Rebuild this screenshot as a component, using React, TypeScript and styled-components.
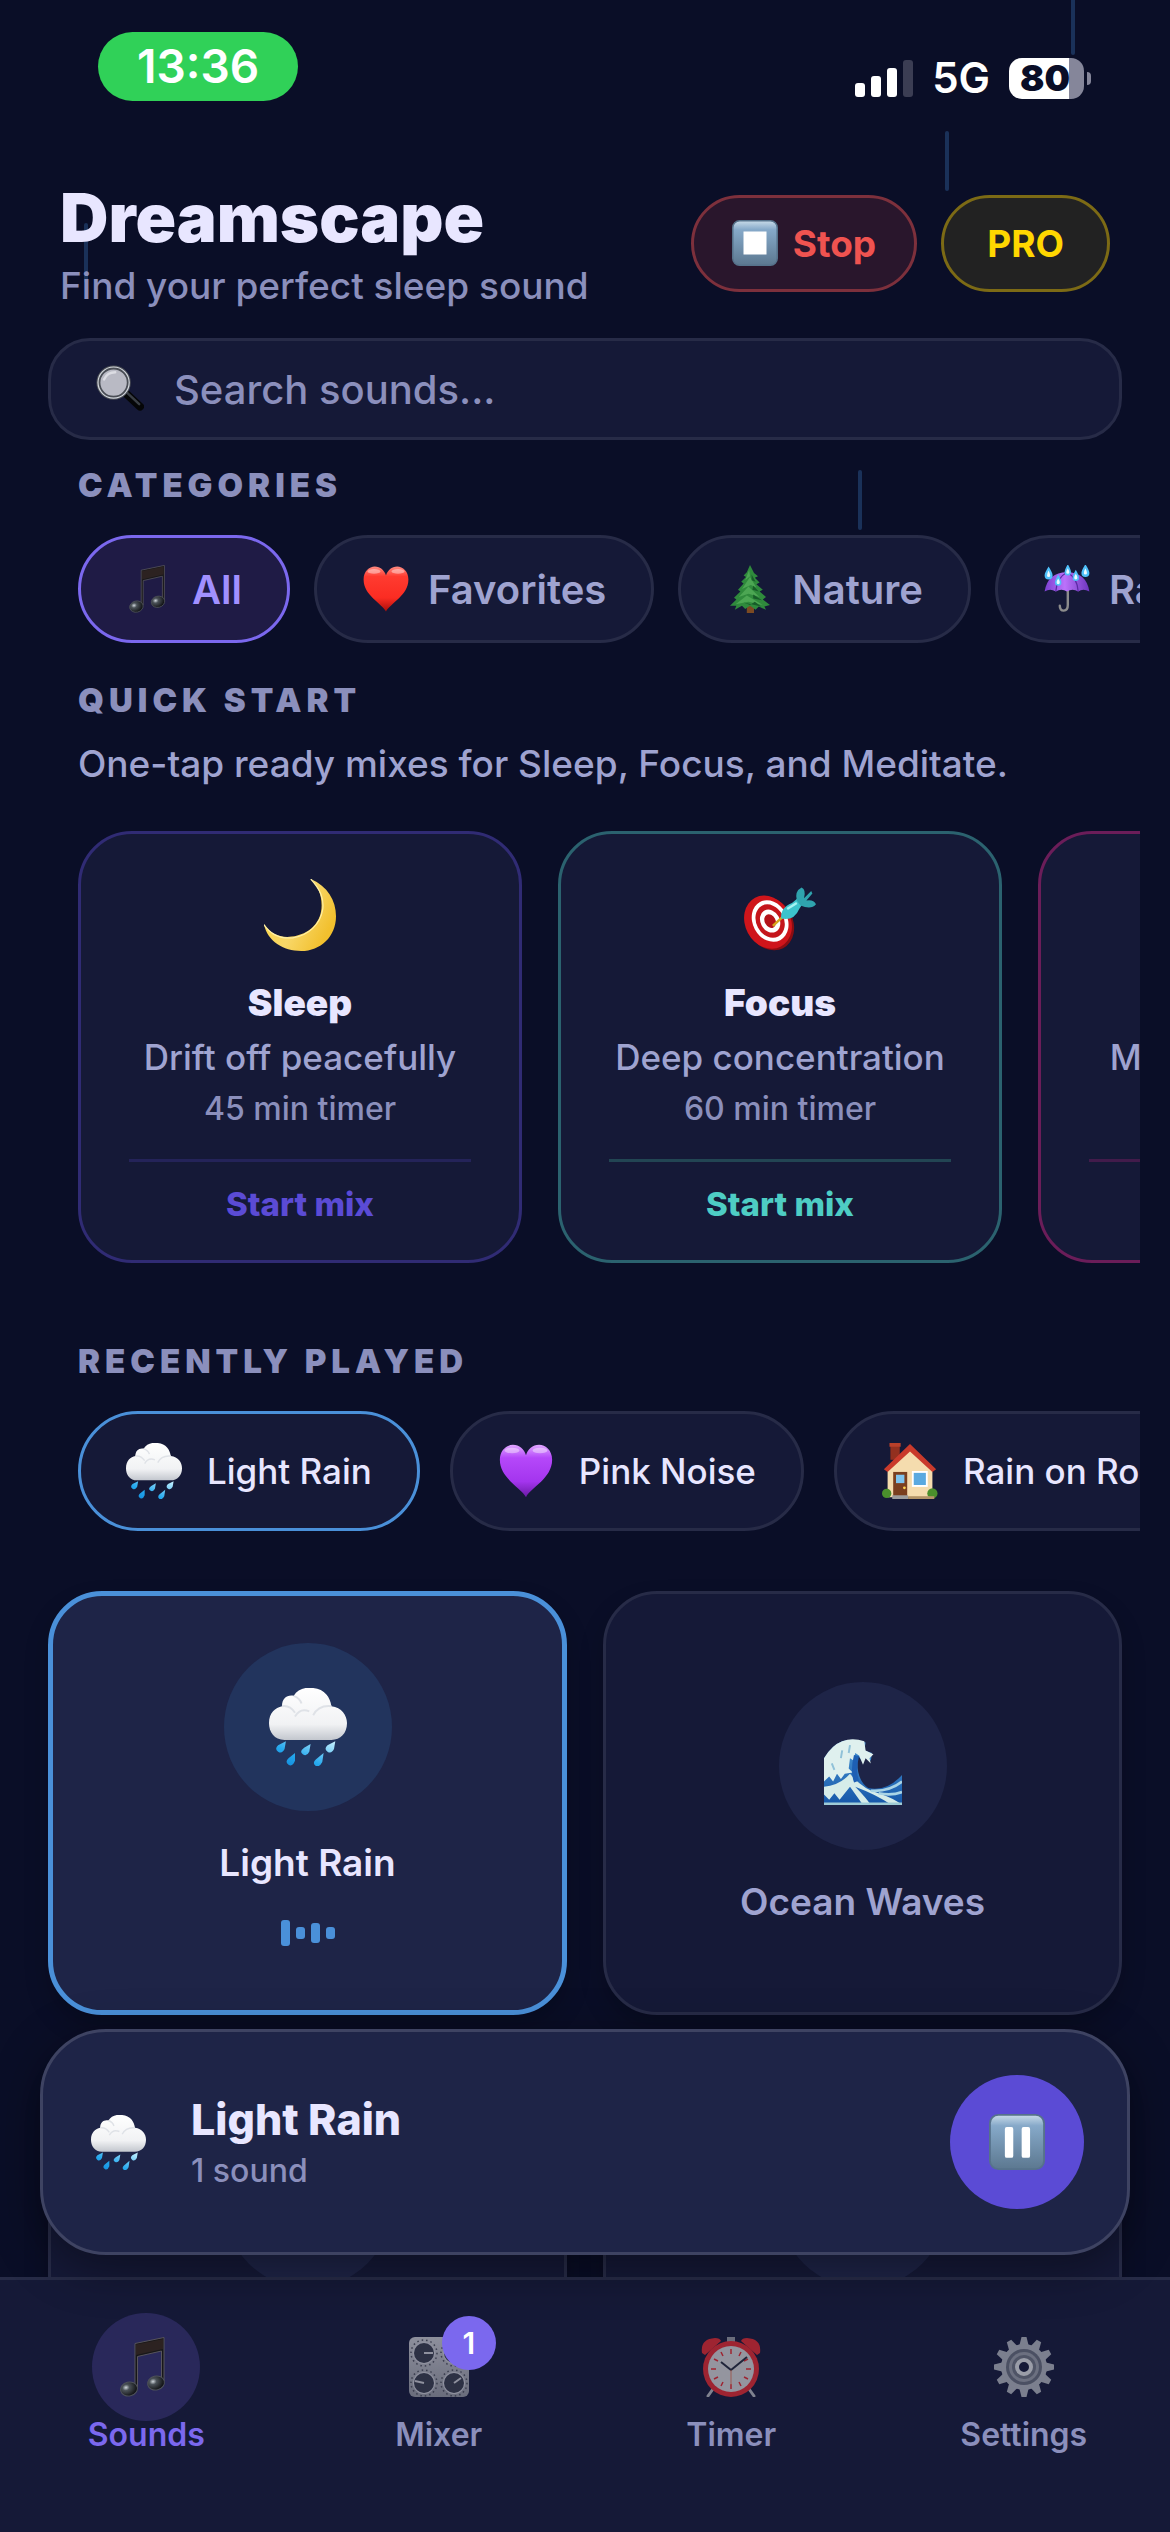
import React from "react";
import styled, { createGlobalStyle } from "styled-components";

const color = {
  bg: "#0a0e27",
  surface: "#151937",
  raised: "#1e2447",
  line: "#272b47",
  text: "#e8e6ff",
  soft: "#9fa3d0",
  muted: "#8b8fbc",
  violet: "#7b68ee",
  indigo: "#5b4bd5",
  blue: "#4a90d9",
};

const GlobalStyle = createGlobalStyle`
  *, *::before, *::after { box-sizing: border-box; }
  html, body, #root { height: 100%; }
  body {
    margin: 0;
    background: ${color.bg};
    color: ${color.text};
    font-family: Inter, Roboto, "Liberation Sans", sans-serif;
  }
  button, input { font-family: inherit; margin: 0; }
  button { cursor: pointer; }
  h1, h2, p { margin: 0; }
  svg { display: block; flex: none; }
`;

/* ---------- Icons ---------- */

type IconProps = { size: number };

const Defs = styled.svg`
  position: absolute;
  width: 0;
  height: 0;
`;

const Gradients = () => (
  <Defs aria-hidden="true">
    <defs>
      <linearGradient id="key" x1="0" y1="0" x2="0" y2="1">
        <stop offset="0" stopColor="#c9dbe9" />
        <stop offset="0.2" stopColor="#86a9c9" />
        <stop offset="1" stopColor="#5c7890" />
      </linearGradient>
      <linearGradient id="cloud" x1="0" y1="0" x2="0" y2="1">
        <stop offset="0" stopColor="#ffffff" />
        <stop offset="0.7" stopColor="#f1f2f4" />
        <stop offset="1" stopColor="#c3c7ce" />
      </linearGradient>
      <linearGradient id="drop" x1="1" y1="0" x2="0" y2="1">
        <stop offset="0" stopColor="#c8f2ff" />
        <stop offset="0.6" stopColor="#26a9ee" />
        <stop offset="1" stopColor="#0d86d8" />
      </linearGradient>
      <linearGradient id="redHeart" x1="0" y1="0" x2="0" y2="1">
        <stop offset="0" stopColor="#ff8a80" />
        <stop offset="0.22" stopColor="#ff3b30" />
        <stop offset="0.7" stopColor="#fb2c22" />
        <stop offset="1" stopColor="#a80f0b" />
      </linearGradient>
      <linearGradient id="purpleHeart" x1="0" y1="0" x2="0" y2="1">
        <stop offset="0" stopColor="#e0a6ff" />
        <stop offset="0.25" stopColor="#b548fa" />
        <stop offset="0.7" stopColor="#a435ee" />
        <stop offset="1" stopColor="#6a1aa5" />
      </linearGradient>
      <linearGradient id="moon" x1="0" y1="0" x2="1" y2="0.5">
        <stop offset="0" stopColor="#ffd83a" />
        <stop offset="0.6" stopColor="#f8d768" />
        <stop offset="1" stopColor="#f2c02e" />
      </linearGradient>
      <linearGradient id="umbrella" x1="0" y1="0" x2="1" y2="0">
        <stop offset="0" stopColor="#7a3fd0" />
        <stop offset="0.45" stopColor="#bb72fb" />
        <stop offset="1" stopColor="#6c35bd" />
      </linearGradient>
      <linearGradient id="wave" x1="0" y1="0" x2="0" y2="1">
        <stop offset="0" stopColor="#4d9bd8" />
        <stop offset="1" stopColor="#1556a8" />
      </linearGradient>
      <linearGradient id="metal" x1="0" y1="0" x2="0" y2="1">
        <stop offset="0" stopColor="#8d8f9c" />
        <stop offset="1" stopColor="#6a6d7c" />
      </linearGradient>
      <radialGradient id="noteHead" cx="0.35" cy="0.35" r="0.7">
        <stop offset="0" stopColor="#cfd6dc" />
        <stop offset="0.3" stopColor="#4b5258" />
        <stop offset="1" stopColor="#0b0c0e" />
      </radialGradient>
    </defs>
  </Defs>
);

const Svg = ({ size, children }: IconProps & { children: React.ReactNode }) => (
  <svg width={size} height={size} viewBox="0 0 60 60" aria-hidden="true">
    {children}
  </svg>
);

const StopIcon = ({ size }: IconProps) => (
  <Svg size={size}>
    <rect x="1" y="1" width="58" height="58" rx="9" fill="url(#key)" stroke="#56728b" strokeWidth="2" />
    <rect x="15" y="15" width="30" height="30" fill="#fff" />
  </Svg>
);

const PauseIcon = ({ size }: IconProps) => (
  <Svg size={size}>
    <rect x="1" y="1" width="58" height="58" rx="9" fill="url(#key)" stroke="#56728b" strokeWidth="2" />
    <rect x="17" y="14" width="9" height="33" rx="2" fill="#fff" />
    <rect x="35" y="14" width="9" height="33" rx="2" fill="#fff" />
  </Svg>
);

const SearchIcon = ({ size }: IconProps) => (
  <Svg size={size}>
    <path d="M38 36 L55 52" stroke="#050607" strokeWidth="10" strokeLinecap="round" />
    <path d="M38 34 L54 49" stroke="#3a3f45" strokeWidth="3" strokeLinecap="round" />
    <circle cx="22" cy="22" r="19" fill="#b9bac4" stroke="#4a4e55" strokeWidth="5" />
    <circle cx="22" cy="22" r="19.5" fill="none" stroke="#d4d8de" strokeWidth="1.5" />
    <path d="M10 18 Q14 9 24 9" stroke="#dcdde3" strokeWidth="3" fill="none" strokeLinecap="round" />
  </Svg>
);

const NoteIcon = ({ size }: IconProps) => (
  <Svg size={size}>
    <path
      d="M19 6.5 L48 0.5 V44 H45.5 V14 L21.5 19.5 V50 H19 Z"
      fill="#171719"
      stroke="#57545c"
      strokeWidth="1"
    />
    <path d="M20 7.500 L47 2 V12 L20 18 Z" fill="#2c2221" />
    <ellipse cx="13" cy="52" rx="8.5" ry="7" transform="rotate(-14 13 52)" fill="url(#noteHead)" stroke="#4d5159" />
    <ellipse cx="40" cy="46" rx="8.5" ry="7" transform="rotate(-14 40 46)" fill="url(#noteHead)" stroke="#4d5159" />
  </Svg>
);

const Heart = ({ size, fill }: IconProps & { fill: string }) => (
  <Svg size={size}>
    <path
      d="M30 58 C25 48 2 38 2 18 C2 8 9 2 16 2 C23 2 28 7 30 13 C32 7 37 2 44 2 C51 2 58 8 58 18 C58 38 35 48 30 58 Z"
      fill={`url(#${fill})`}
    />
    <ellipse cx="15" cy="8" rx="8" ry="3" fill="#fff" opacity="0.4" />
    <ellipse cx="45" cy="8" rx="8" ry="3" fill="#fff" opacity="0.4" />
  </Svg>
);
const RedHeart = ({ size }: IconProps) => <Heart size={size} fill="redHeart" />;
const PurpleHeart = ({ size }: IconProps) => <Heart size={size} fill="purpleHeart" />;

const TreeIcon = ({ size }: IconProps) => (
  <Svg size={size}>
    <rect x="26" y="48" width="9" height="12" fill="#7c4a22" />
    <path
      d="M30 0 L35 10 L40 14 L36 16 L42 22 L38 24 L46 31 L42 33 L50 40 L46 43 L55 50 L48 52 L50 56 L41 52 L37 56 L30 51 L24 55 L20 51 L11 56 L13 51 L5 51 L13 43 L10 41 L18 33 L15 31 L22 23 L19 21 L25 15 L22 13 L26 9 Z"
      fill="#2f8a3c"
    />
    <path
      d="M29 6 L24 19 L30 14 Z M30 15 L20 30 L31 25 L38 28 Z M28 27 L16 40 L28 36 L42 40 Z M26 38 L12 49 L28 46 L46 50 Z"
      fill="#58b25c"
      opacity="0.7"
    />
    <path d="M32 12 L37 21 L32 19 Z M34 26 L41 33 L33 31 Z M34 37 L45 44 L34 42 Z M22 47 L30 50 L36 46 L44 52 Z" fill="#175c29" />
  </Svg>
);

const UmbrellaIcon = ({ size }: IconProps) => (
  <Svg size={size}>
    <path d="M31 30 V50 Q31 57 26 57 Q21 57 21 51" stroke="#8c8c8c" strokeWidth="3" fill="none" strokeLinecap="round" />
    <path d="M2 33 Q6 9 30 9 Q54 9 58 33 Q50 29 44 33 Q37 29 30 33 Q23 29 16 33 Q9 29 2 33 Z" fill="url(#umbrella)" />
    <path d="M30 9 Q17 16 16 33 M30 9 Q43 16 44 33" stroke="#5b2aa3" strokeWidth="1.5" fill="none" />
    <path
      d="M7 2 q5 8 5 11 a5 5 0 0 1 -10 0 q0 -3 5 -11 Z M31 -1 q4 7 4 10 a4 4 0 0 1 -8 0 q0 -3 4 -10 Z M53 -1 q5 8 5 11 a5 5 0 0 1 -10 0 q0 -3 5 -11 Z M19 12 q4 7 4 10 a4 4 0 0 1 -8 0 q0 -3 4 -10 Z M41 6 q4 7 4 10 a4 4 0 0 1 -8 0 q0 -3 4 -10 Z"
      fill="#4fc0fa"
    />
    <path
      d="M7 7 q2 4 2 6 a2 2 0 0 1 -4 0 q0 -2 2 -6 Z M31 4 q2 4 2 5 a2 2 0 0 1 -4 0 q0 -2 2 -5 Z M53 4 q2 4 2 6 a2 2 0 0 1 -4 0 q0 -2 2 -6 Z M19 17 q2 3 2 5 a2 2 0 0 1 -4 0 q0 -2 2 -5 Z M41 11 q2 3 2 5 a2 2 0 0 1 -4 0 q0 -2 2 -5 Z"
      fill="#eefaff"
    />
  </Svg>
);

const MoonIcon = ({ size }: IconProps) => (
  <Svg size={size}>
    <path d="M39 0 C53 6 60 18 60 31 C60 48 47 60 31 60 C16 60 3 52 0 38 C6 47 15 49 23 48 C38 46 48 36 48 22 C48 13 45 6 39 0 Z" fill="url(#moon)" />
    <path d="M39 0 C47 9 50 16 49 25 C47 38 37 47 24 49 C14 50 6 47 0 38" fill="none" stroke="#fff0a6" strokeWidth="1" />
  </Svg>
);

const TargetIcon = ({ size }: IconProps) => (
  <Svg size={size}>
    <g transform="rotate(-28 20 36)">
      <ellipse cx="21" cy="38" rx="19" ry="23" fill="#8a0d12" />
      <ellipse cx="20" cy="36" rx="19" ry="23" fill="#cf151b" />
      <ellipse cx="22" cy="36" rx="14.5" ry="18" fill="#fff" />
      <ellipse cx="22" cy="36" rx="11.5" ry="14.5" fill="#c5161c" />
      <ellipse cx="22" cy="36" rx="8" ry="10" fill="#fff" />
      <ellipse cx="22" cy="36" rx="4.5" ry="6" fill="#b31319" />
    </g>
    <path d="M24 39 L34 30" stroke="#d6a51c" strokeWidth="2" />
    <path d="M31 33 Q30 24 40 20 L46 15 L50 19 L46 25 Q42 35 31 33 Z" fill="#3cc3cc" />
    <path d="M44 18 Q42 10 48 7 Q52 9 50 16 L56 10 L57 12 L52 18 Q58 17 60 21 Q56 26 47 22 Z" fill="#2fa3ad" />
    <path d="M36 25 L44 20" stroke="#a5f2f2" strokeWidth="2" />
  </Svg>
);

const MeditateIcon = ({ size }: IconProps) => (
  <Svg size={size}>
    <circle cx="30" cy="13" r="10" fill="#f7c873" />
    <path d="M14 52 Q16 26 30 26 Q44 26 46 52 Z" fill="#a856d6" />
    <ellipse cx="30" cy="53" rx="27" ry="6" fill="#6d48b8" />
  </Svg>
);

const RainCloudIcon = ({ size }: IconProps) => (
  <Svg size={size}>
    <path
      d="M12 40 C4 40 0 34 0 27 C0 19 5 15 10 14 C10 8 14 5 19 6 C22 1 28 -1 34 0 C43 1 47 7 48 14 C56 15 60 21 60 27 C60 35 55 40 48 40 Z"
      fill="url(#cloud)"
    />
    <path d="M20 22 Q24 15 31 18 M10 14 Q16 13 20 19 M48 14 Q38 13 34 21 M19 6 Q24 8 25 12" stroke="#dfe2e7" strokeWidth="1.5" fill="none" />
    <path
      d="M13 41 L12 47 Q10 51 7 49 Q4 47 7 44 Z M32 43 L31 49 Q29 53 26 51 Q23 49 27 46 Z M51 41 L50 47 Q48 51 45 49 Q42 47 45 44 Z M20 50 L20 56 Q18 61 15 59 Q12 57 15 54 Z M42 50 L41 57 Q39 61 36 60 Q33 58 36 55 Z"
      fill="url(#drop)"
    />
  </Svg>
);

const HouseIcon = ({ size }: IconProps) => (
  <Svg size={size}>
    <rect x="9" y="2" width="10" height="16" fill="#93301f" />
    <rect x="8" y="0" width="12" height="4" fill="#b9402a" />
    <path d="M6 27 L30 6 L54 27 V58 H6 Z" fill="#f5dcae" />
    <path d="M2 28 L30 1 L58 28 L54 31 L30 9 L6 31 Z" fill="#c93a2b" />
    <rect x="12" y="31" width="15" height="27" fill="#7a3f1f" />
    <rect x="15" y="34" width="9" height="9" fill="#7fc4ee" />
    <circle cx="24" cy="48" r="1.5" fill="#ffd54d" />
    <rect x="32" y="30" width="17" height="17" fill="#fff" />
    <rect x="34" y="32" width="13" height="13" fill="#5aa9e0" />
    <rect x="11" y="56" width="17" height="4" fill="#9c9c9c" />
    <circle cx="5" cy="54" r="5" fill="#4a8f2c" />
    <circle cx="54" cy="54" r="5.5" fill="#4a8f2c" />
    <rect x="28" y="57" width="28" height="3" fill="#b39467" />
  </Svg>
);

const WaveIcon = ({ size }: IconProps) => (
  <Svg size={size}>
    <path
      d="M0 60 V24 Q6 14 14 11 Q22 8 32 12 L31 18 L37 20 L36 26 L32 23 L30 27 L26 22 Q24 40 34 47 Q48 50 60 37 V60 Z"
      fill="url(#wave)"
    />
    <path
      d="M0 24 Q6 14 14 11 Q22 8 31 11 L32 18 L38 21 L35 24 L36 28 L32 24 L30 29 L27 22 L24 20 L23 26 L20 24 L19 32 L22 35 L16 36 L13 40 L10 36 L7 42 L4 38 L0 42 Z"
      fill="#dff0ee"
    />
    <path d="M0 46 Q12 45 20 36 Q30 48 42 51 Q54 55 60 60 H52 Q40 52 24 46 Q32 54 36 60 H30 L20 46 L12 56 L8 51 L4 56 L0 52 Z" fill="#d6ece9" />
    <path d="M36 49 Q50 50 60 42 M42 51 Q52 53 60 50" stroke="#a9d4e6" strokeWidth="2" fill="none" />
    <path d="M0 59 H60" stroke="#9fcbd6" strokeWidth="2" />
    <path d="M25 22 Q22 34 25 42" stroke="#1d5fb4" strokeWidth="4" fill="none" />
    <path d="M6 28 L8 33 M14 18 L13 24 M20 14 L19 20" stroke="#8fc1d8" strokeWidth="1.5" />
  </Svg>
);

const Knob = ({ x, y, tx, ty }: { x: number; y: number; tx: number; ty: number }) => (
  <g>
    <circle cx={x} cy={y} r="13" fill="none" stroke="#3b3e4f" strokeWidth="1.5" strokeDasharray="1.5 3" />
    <circle cx={x} cy={y} r="11" fill="#9092a0" />
    <circle cx={x} cy={y} r="10" fill="#2d3144" />
    <path d={`M${x} ${y} L${tx} ${ty}`} stroke="#8f919e" strokeWidth="2" />
  </g>
);

const MixerIcon = ({ size }: IconProps) => (
  <Svg size={size}>
    <rect x="0" y="0" width="60" height="60" rx="6" fill="url(#metal)" />
    <Knob x={15} y={16} tx={24} ty={16} />
    <Knob x={45} y={16} tx={45} ty={8} />
    <Knob x={15} y={46} tx={6} ty={44} />
    <Knob x={45} y={46} tx={52} ty={41} />
  </Svg>
);

const ClockIcon = ({ size }: IconProps) => (
  <Svg size={size}>
    <path d="M12 52 L7 59 M48 52 L53 59" stroke="#7f828f" strokeWidth="3" strokeLinecap="round" />
    <rect x="26" y="0" width="8" height="6" fill="#6a6d7c" />
    <path d="M1 16 Q-1 2 14 1 Q19 1 20 4 L4 18 Z M59 16 Q61 2 46 1 Q41 1 40 4 L56 18 Z" fill="#9e2431" />
    <circle cx="30" cy="32" r="28" fill="#9e2431" />
    <circle cx="30" cy="32" r="23" fill="#94959f" />
    <path d="M30 12 V17 M30 47 V52 M10 32 H15 M45 32 H50 M20 15 L22 19 M40 15 L38 19 M13 22 L17 24 M47 22 L43 24 M13 42 L17 40 M47 42 L43 40 M20 49 L22 45 M40 49 L38 45" stroke="#9e2431" strokeWidth="1.5" />
    <path d="M20 25 L30 33 L46 20" stroke="#20253a" strokeWidth="2" fill="none" />
    <path d="M30 33 V48" stroke="#9b5a52" strokeWidth="1" />
  </Svg>
);

const GearIcon = ({ size }: IconProps) => (
  <Svg size={size}>
    {Array.from({ length: 12 }, (_, i) => (
      <path key={i} d="M25 10 L27.5 0 H32.5 L35 10 Z" fill="#7b7f8e" transform={`rotate(${i * 30} 30 30)`} />
    ))}
    <circle cx="30" cy="30" r="23" fill="#7b7f8e" />
    <circle cx="30" cy="30" r="18" fill="#4b5063" />
    <circle cx="30" cy="30" r="15" fill="#6c7080" />
    <circle cx="30" cy="30" r="12" fill="#4f5466" />
    <circle cx="30" cy="30" r="7" fill="#151937" stroke="#9a9da8" strokeWidth="4" />
  </Svg>
);

/* ---------- Shell ---------- */

const Screen = styled.div`
  position: relative;
  isolation: isolate;
  display: flex;
  flex-direction: column;
  height: 100vh;
  overflow: hidden;
  background: ${color.bg};
`;

const Drop = styled.span<{ $left: number; $top: number }>`
  position: absolute;
  z-index: -1;
  left: ${(p) => p.$left}%;
  top: ${(p) => p.$top}px;
  width: 4px;
  height: 60px;
  border-radius: 2px;
  background: #1a3159;
`;

const StatusBar = styled.header`
  display: flex;
  flex: none;
  justify-content: space-between;
  align-items: flex-start;
  height: 140px;
  padding: 32px 86px 0 98px;
`;

const TimePill = styled.time`
  padding: 0 39px;
  border-radius: 35px;
  background: #30d158;
  color: #fff;
  font-size: 46px;
  font-weight: 600;
  line-height: 69px;
`;

const Signals = styled.div`
  display: flex;
  align-items: center;
  gap: 19px;
  padding-top: 19px;
  color: #fff;
  font-size: 42px;
  font-weight: 600;
  line-height: 54px;
`;

const Battery = styled.span`
  position: relative;
  width: 75px;
  height: 41px;
  padding-right: 3px;
  border-radius: 13px;
  background: linear-gradient(90deg, #fff 80%, #85869a 80%);
  color: ${color.bg};
  font-size: 36px;
  font-weight: 900;
  line-height: 41px;
  text-align: center;

  &::after {
    content: "";
    position: absolute;
    top: 14px;
    right: -7px;
    width: 4px;
    height: 13px;
    border-radius: 0 4px 4px 0;
    background: #85869a;
  }
`;

const Content = styled.main`
  flex: 1;
  min-height: 0;
  overflow-y: auto;
  scrollbar-width: none;
`;

const Header = styled.div`
  display: flex;
  justify-content: space-between;
  align-items: center;
  padding: 38px 60px 30px;
`;

const Title = styled.h1`
  font-size: 67px;
  font-weight: 900;
  line-height: 80px;
`;

const Subtitle = styled.p`
  margin-top: 6px;
  color: ${color.muted};
  font-size: 37px;
  font-weight: 500;
  line-height: 44px;
`;

const Actions = styled.div`
  display: flex;
  gap: 24px;
`;

const tones = {
  stop: { fg: "#ef5350", bg: "#29162c", edge: "#7d303c" },
  pro: { fg: "#ffd700", bg: "#222222", edge: "#7c6a15" },
};

const Pill = styled.button<{ $tone: keyof typeof tones }>`
  display: flex;
  align-items: center;
  gap: 15px;
  height: 97px;
  padding: 0 ${(p) => (p.$tone === "pro" ? 43 : 38)}px;
  border: 3px solid ${(p) => tones[p.$tone].edge};
  border-radius: 49px;
  background: ${(p) => tones[p.$tone].bg};
  color: ${(p) => tones[p.$tone].fg};
  font-size: 37px;
  font-weight: 700;
`;

const SearchBox = styled.label`
  display: flex;
  align-items: center;
  gap: 30px;
  height: 102px;
  margin: 0 48px;
  padding: 0 45px;
  border: 3px solid ${color.line};
  border-radius: 42px;
  background: ${color.surface};
`;

const SearchInput = styled.input`
  flex: 1;
  min-width: 0;
  padding: 0;
  border: 0;
  outline: 0;
  background: none;
  color: ${color.text};
  font-size: 40px;
  font-weight: 500;

  &::placeholder {
    color: ${color.muted};
    opacity: 1;
  }
`;

/* ---------- Sections ---------- */

const Section = styled.section<{ $top: number }>`
  padding: ${(p) => p.$top}px 30px 0 78px;
`;

const SectionTitle = styled.h2`
  color: ${color.muted};
  font-size: 33px;
  font-weight: 900;
  letter-spacing: 5px;
  line-height: 40px;
  text-transform: uppercase;
`;

const Lead = styled.p`
  margin-top: 20px;
  color: ${color.soft};
  font-size: 37px;
  font-weight: 500;
  line-height: 48px;
  white-space: nowrap;
`;

const Rail = styled.div<{ $gap: number; $top: number }>`
  display: flex;
  gap: ${(p) => p.$gap}px;
  margin-top: ${(p) => p.$top}px;
  overflow-x: auto;
  scrollbar-width: none;
`;

const Chip = styled.button<{ $active?: boolean }>`
  display: flex;
  flex: none;
  align-items: center;
  gap: 18px;
  height: 108px;
  padding: 0 45px;
  border: 3px solid ${(p) => (p.$active ? color.violet : color.line)};
  border-radius: 54px;
  background: ${(p) => (p.$active ? "#1f1b45" : color.surface)};
  color: ${(p) => (p.$active ? "#a190ff" : color.soft)};
  font-size: 40px;
  font-weight: 600;
  white-space: nowrap;
`;

const RecentChip = styled.button<{ $active?: boolean }>`
  display: flex;
  flex: none;
  align-items: center;
  gap: 25px;
  height: 120px;
  padding: 0 45px;
  border: 3px solid ${(p) => (p.$active ? color.blue : color.line)};
  border-radius: 60px;
  background: ${color.surface};
  color: ${color.text};
  font-size: 35px;
  font-weight: 500;
  white-space: nowrap;
`;

const MixCard = styled.button<{ $edge: string }>`
  display: flex;
  flex: none;
  flex-direction: column;
  align-items: center;
  width: 444px;
  padding: 45px 48px 36px;
  border: 3px solid ${(p) => p.$edge};
  border-radius: 54px;
  background: ${color.surface};
  white-space: nowrap;
`;

const MixName = styled.span`
  margin-top: 30px;
  color: ${color.text};
  font-size: 37px;
  font-weight: 900;
  line-height: 44px;
`;

const MixText = styled.span`
  margin-top: 10px;
  color: ${color.soft};
  font-size: 35px;
  font-weight: 500;
  line-height: 44px;
`;

const MixTimer = styled.span`
  margin-top: 10px;
  color: ${color.muted};
  font-size: 32px;
  font-weight: 500;
  line-height: 40px;
`;

const MixAction = styled.span<{ $tint: string; $rule: string }>`
  align-self: stretch;
  margin-top: 30px;
  padding-top: 22px;
  border-top: 3px solid ${(p) => p.$rule};
  color: ${(p) => p.$tint};
  font-size: 33px;
  font-weight: 800;
  line-height: 40px;
  text-align: center;
`;

/* ---------- Sound grid ---------- */

const Grid = styled.section`
  display: grid;
  grid-template-columns: 1fr 1fr;
  gap: 36px;
  padding: 60px 48px 300px;
`;

const SoundCard = styled.button<{ $active?: boolean }>`
  display: flex;
  flex-direction: column;
  align-items: center;
  justify-content: center;
  height: 424px;
  padding: 0 60px;
  border: ${(p) => (p.$active ? `5px solid ${color.blue}` : `3px solid ${color.line}`)};
  border-radius: 54px;
  background: ${(p) => (p.$active ? color.raised : color.surface)};
  box-shadow: 0 12px 24px rgba(0, 0, 0, 0.2);
`;

const SoundDisc = styled.span<{ $active?: boolean }>`
  display: grid;
  place-items: center;
  flex: none;
  width: 168px;
  height: 168px;
  border-radius: 50%;
  background: ${(p) => (p.$active ? "#22345d" : color.raised)};
`;

const SoundName = styled.span<{ $active?: boolean }>`
  max-width: 260px;
  margin-top: 30px;
  color: ${(p) => (p.$active ? color.text : color.soft)};
  font-size: 37px;
  font-weight: 600;
  line-height: 44px;
`;

const Equalizer = styled.span`
  display: flex;
  align-items: center;
  gap: 6px;
  height: 60px;
  margin-top: 18px;
`;

const Bar = styled.span<{ $height: number }>`
  width: 9px;
  height: ${(p) => p.$height}px;
  border-radius: 3px;
  background: ${color.blue};
`;

/* ---------- Player and tabs ---------- */

const Footer = styled.div`
  position: relative;
  flex: none;
`;

const Player = styled.section`
  position: absolute;
  right: 40px;
  bottom: 100%;
  left: 40px;
  display: flex;
  align-items: center;
  gap: 45px;
  margin-bottom: 22px;
  padding: 43px 43px 43px 48px;
  border: 3px solid #3e4362;
  border-radius: 66px;
  background: ${color.raised};
  box-shadow: 0 12px 48px rgba(0, 0, 0, 0.4);
`;

const PlayerText = styled.div`
  display: flex;
  flex: 1;
  flex-direction: column;
  gap: 6px;
`;

const PlayerTitle = styled.span`
  font-size: 43px;
  font-weight: 800;
  line-height: 52px;
`;

const PlayerMeta = styled.span`
  color: ${color.muted};
  font-size: 32px;
  font-weight: 500;
  line-height: 40px;
`;

const PauseButton = styled.button`
  display: grid;
  place-items: center;
  width: 134px;
  height: 134px;
  padding: 0;
  border: 0;
  border-radius: 50%;
  background: ${color.indigo};
`;

const Tabs = styled.nav`
  display: grid;
  grid-template-columns: repeat(4, 1fr);
  padding: 33px 0 83px;
  border-top: 3px solid ${color.line};
  background: ${color.surface};
`;

const Tab = styled.button<{ $active?: boolean }>`
  display: flex;
  flex-direction: column;
  align-items: center;
  padding: 0;
  border: 0;
  background: none;
  color: ${(p) => (p.$active ? color.violet : color.muted)};
  font-size: 32px;
  font-weight: 600;
  line-height: 28px;
`;

const TabDisc = styled.span<{ $active?: boolean }>`
  position: relative;
  display: grid;
  place-items: center;
  width: 108px;
  height: 108px;
  border-radius: 50%;
  background: ${(p) => (p.$active ? "#29285a" : "none")};
`;

const Badge = styled.span`
  position: absolute;
  top: 3px;
  right: -3px;
  width: 54px;
  height: 54px;
  border-radius: 50%;
  background: ${color.violet};
  color: #fff;
  font-size: 30px;
  line-height: 54px;
  text-align: center;
`;

/* ---------- Data ---------- */

type Icon = React.ComponentType<IconProps>;

const drops = [
  { left: 91.5, top: -5 },
  { left: 80.8, top: 131 },
  { left: 7.2, top: 223 },
  { left: 73.3, top: 470 },
];

const categories: { name: string; icon: Icon; active?: boolean }[] = [
  { name: "All", icon: NoteIcon, active: true },
  { name: "Favorites", icon: RedHeart },
  { name: "Nature", icon: TreeIcon },
  { name: "Rain", icon: UmbrellaIcon },
];

const mixes: { name: string; text: string; minutes: number; icon: Icon; tint: string; edge: string; rule: string }[] = [
  { name: "Sleep", text: "Drift off peacefully", minutes: 45, icon: MoonIcon, tint: "#5b4bd5", edge: "#302b74", rule: "#242359" },
  { name: "Focus", text: "Deep concentration", minutes: 60, icon: TargetIcon, tint: "#4ecdc4", edge: "#2b626f", rule: "#224553" },
  { name: "Meditate", text: "Mindful relaxation", minutes: 20, icon: MeditateIcon, tint: "#e0218a", edge: "#6b1d59", rule: "#421b4b" },
];

const recents: { name: string; icon: Icon; active?: boolean }[] = [
  { name: "Light Rain", icon: RainCloudIcon, active: true },
  { name: "Pink Noise", icon: PurpleHeart },
  { name: "Rain on Roof", icon: HouseIcon },
];

const sounds: { name: string; icon?: Icon; active?: boolean }[] = [
  { name: "Light Rain", icon: RainCloudIcon, active: true },
  { name: "Ocean Waves", icon: WaveIcon },
  { name: "Distant Thunder" },
  { name: "Crackling Campfire" },
];

const tabs: { name: string; icon: Icon; active?: boolean; count?: number }[] = [
  { name: "Sounds", icon: NoteIcon, active: true },
  { name: "Mixer", icon: MixerIcon, count: 1 },
  { name: "Timer", icon: ClockIcon },
  { name: "Settings", icon: GearIcon },
];

export default function App() {
  return (
    <Screen>
      <GlobalStyle />
      <Gradients />
      {drops.map((d) => (
        <Drop key={d.left} $left={d.left} $top={d.top} />
      ))}

      <StatusBar>
        <TimePill>13:36</TimePill>
        <Signals>
          <svg width="58" height="39" viewBox="0 0 58 39" fill="#fff" aria-hidden="true">
            <rect x="0" y="24" width="10" height="14" rx="3" />
            <rect x="16" y="17" width="10" height="21" rx="3" />
            <rect x="32" y="9" width="10" height="29" rx="3" />
            <rect x="48" y="1" width="10" height="37" rx="3" fill="#3b3d53" />
          </svg>
          <span>5G</span>
          <Battery>80</Battery>
        </Signals>
      </StatusBar>

      <Content>
        <Header>
          <div>
            <Title>Dreamscape</Title>
            <Subtitle>Find your perfect sleep sound</Subtitle>
          </div>
          <Actions>
            <Pill type="button" $tone="stop">
              <StopIcon size={46} />
              Stop
            </Pill>
            <Pill type="button" $tone="pro">
              PRO
            </Pill>
          </Actions>
        </Header>

        <SearchBox>
          <SearchIcon size={48} />
          <SearchInput type="text" placeholder="Search sounds..." aria-label="Search sounds" />
        </SearchBox>

        <Section $top={25}>
          <SectionTitle>Categories</SectionTitle>
          <Rail $gap={24} $top={30}>
            {categories.map(({ name, icon: Glyph, active }) => (
              <Chip key={name} type="button" $active={active}>
                <Glyph size={48} />
                {name}
              </Chip>
            ))}
          </Rail>
        </Section>

        <Section $top={37}>
          <SectionTitle>Quick start</SectionTitle>
          <Lead>One-tap ready mixes for Sleep, Focus, and Meditate.</Lead>
          <Rail $gap={36} $top={43}>
            {mixes.map(({ name, text, minutes, icon: Glyph, tint, edge, rule }) => (
              <MixCard key={name} type="button" $edge={edge}>
                <Glyph size={72} />
                <MixName>{name}</MixName>
                <MixText>{text}</MixText>
                <MixTimer>{minutes} min timer</MixTimer>
                <MixAction $tint={tint} $rule={rule}>
                  Start mix
                </MixAction>
              </MixCard>
            ))}
          </Rail>
        </Section>

        <Section $top={78}>
          <SectionTitle>Recently played</SectionTitle>
          <Rail $gap={30} $top={30}>
            {recents.map(({ name, icon: Glyph, active }) => (
              <RecentChip key={name} type="button" $active={active}>
                <Glyph size={56} />
                {name}
              </RecentChip>
            ))}
          </Rail>
        </Section>

        <Grid>
          {sounds.map(({ name, icon: Glyph, active }) => (
            <SoundCard key={name} type="button" $active={active}>
              <SoundDisc $active={active}>{Glyph && <Glyph size={78} />}</SoundDisc>
              <SoundName $active={active}>{name}</SoundName>
              {active && (
                <Equalizer>
                  <Bar $height={26} />
                  <Bar $height={12} />
                  <Bar $height={20} />
                  <Bar $height={12} />
                </Equalizer>
              )}
            </SoundCard>
          ))}
        </Grid>
      </Content>

      <Footer>
        <Player>
          <RainCloudIcon size={55} />
          <PlayerText>
            <PlayerTitle>Light Rain</PlayerTitle>
            <PlayerMeta>1 sound</PlayerMeta>
          </PlayerText>
          <PauseButton type="button" aria-label="Pause">
            <PauseIcon size={56} />
          </PauseButton>
        </Player>
        <Tabs>
          {tabs.map(({ name, icon: Glyph, active, count }) => (
            <Tab key={name} type="button" $active={active}>
              <TabDisc $active={active}>
                <Glyph size={60} />
                {count && <Badge>{count}</Badge>}
              </TabDisc>
              {name}
            </Tab>
          ))}
        </Tabs>
      </Footer>
    </Screen>
  );
}
